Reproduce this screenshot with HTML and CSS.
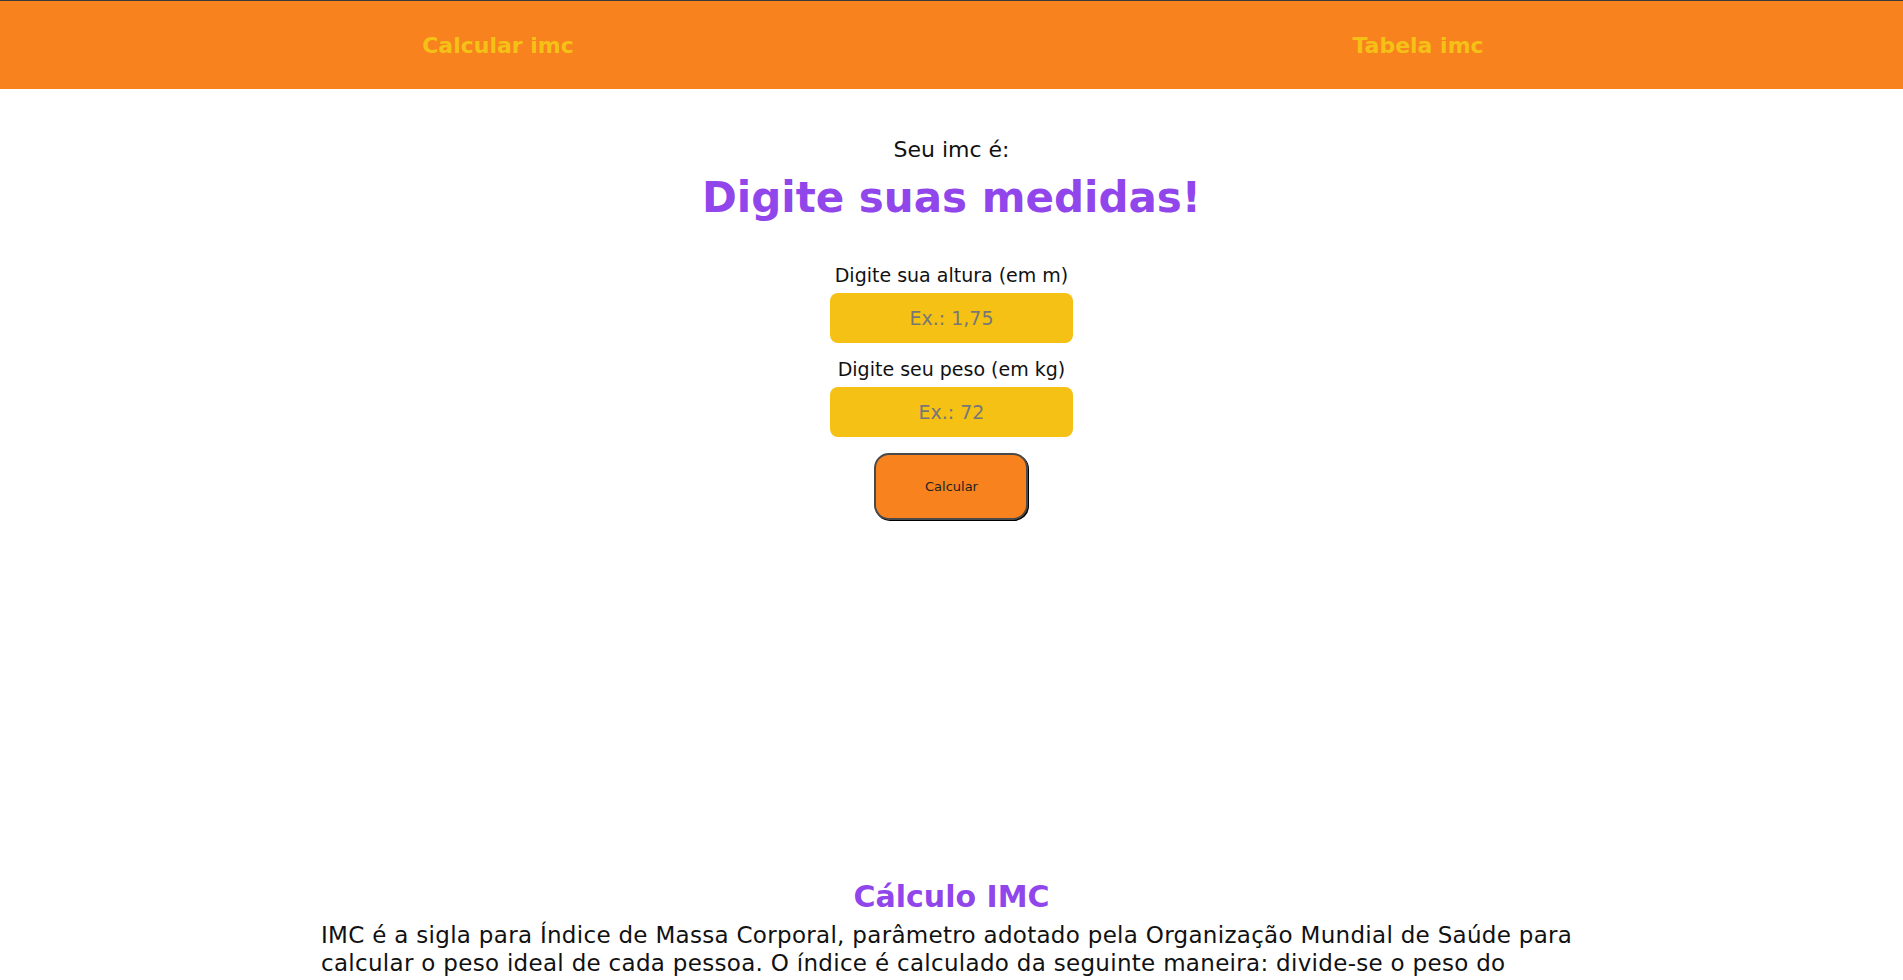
FILE: index.html
```html
<!DOCTYPE html>
<html lang="pt-BR">
<head>
<meta charset="utf-8">
<title>Calculadora IMC</title>
<link rel="stylesheet" href="styles.css">
</head>
<body>
<header class="topbar">
  <nav class="nav">
    <a class="nav-link" href="#calc">Calcular imc</a>
    <a class="nav-link" href="#tabela">Tabela imc</a>
  </nav>
</header>
<main class="main">
  <section class="calc" id="calc">
    <p class="result-label">Seu imc é:</p>
    <h1 class="result">Digite suas medidas!</h1>
    <form class="form">
      <label class="field-label" for="altura">Digite sua altura (em m)</label>
      <input class="field" id="altura" type="text" placeholder="Ex.: 1,75">
      <label class="field-label field-label-2" for="peso">Digite seu peso (em kg)</label>
      <input class="field" id="peso" type="text" placeholder="Ex.: 72">
      <button class="btn" type="button">Calcular</button>
    </form>
  </section>
  <section class="info" id="tabela">
    <h2 class="info-title">Cálculo IMC</h2>
    <p class="info-text">IMC é a sigla para Índice de Massa Corporal, parâmetro adotado pela Organização Mundial de Saúde para calcular o peso ideal de cada pessoa. O índice é calculado da seguinte maneira: divide-se o peso do paciente pela sua altura elevada ao quadrado.</p>
  </section>
</main>
</body>
</html>
```
FILE: styles.css
```css
html, body {
  margin: 0;
  padding: 0;
  background: #ffffff;
}
body {
  font-family: "DejaVu Sans", "Liberation Sans", sans-serif;
  color: #111111;
}
.topbar {
  background: #f8821e;
  border-top: 1px solid #3a3a3a;
}
.nav {
  display: flex;
  height: 88px;
  align-items: center;
  padding: 0 25px 0 38px;
}
.nav-link {
  flex: 1;
  text-align: center;
  color: #f5c116;
  font-weight: 700;
  font-size: 22px;
  text-decoration: none;
}
.main {
  display: flex;
  flex-direction: column;
  align-items: center;
}
.calc {
  display: flex;
  flex-direction: column;
  align-items: center;
  padding-top: 47px;
}
.result-label {
  margin: 0;
  font-size: 22px;
  line-height: 28px;
  color: #111;
}
.result {
  margin: 9px 0 0;
  font-size: 42px;
  line-height: 50px;
  font-weight: 700;
  color: #9146eb;
}
.form {
  display: flex;
  flex-direction: column;
  align-items: center;
  margin-top: 40px;
}
.field-label {
  font-size: 19px;
  line-height: 24px;
  color: #111;
}
.field-label-2 {
  margin-top: 14px;
}
.field {
  box-sizing: border-box;
  margin-top: 6px;
  width: 243px;
  height: 50px;
  border: none;
  border-radius: 8px;
  background: #f5c115;
  font-family: inherit;
  font-size: 19px;
  text-align: center;
  color: #333;
  outline: none;
}
.field::placeholder {
  color: #777777;
}
.btn {
  box-sizing: border-box;
  margin-top: 16px;
  width: 154px;
  height: 67px;
  border: 2px solid #4a4a4a;
  border-radius: 15px;
  background: #f8821e;
  box-shadow: 1px 1px 0 #000;
  font-family: inherit;
  font-size: 13px;
  color: #222;
  cursor: pointer;
}
.info {
  box-sizing: border-box;
  width: 100%;
  padding: 0 316px 0 321px;
  margin-top: 359px;
  display: flex;
  flex-direction: column;
  align-items: center;
}
.info-title {
  margin: 0 0 0 -5px;
  font-size: 30px;
  line-height: 36px;
  font-weight: 700;
  color: #9146eb;
}
.info-text {
  align-self: stretch;
  margin: 6px 0 0;
  font-size: 23px;
  line-height: 28px;
  letter-spacing: 0.3px;
  color: #111;
}
```
